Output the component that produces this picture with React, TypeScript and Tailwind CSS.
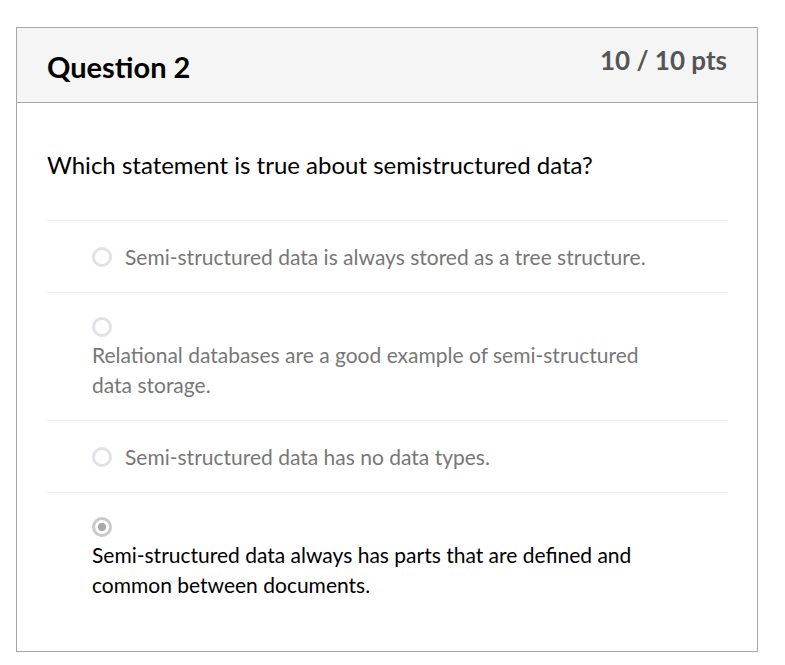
const answers = [
  { text: 'Semi-structured data is always stored as a tree structure.', wrap: false, picked: false },
  { text: 'Relational databases are a good example of semi-structured data storage.', wrap: true, picked: false },
  { text: 'Semi-structured data has no data types.', wrap: false, picked: false },
  { text: 'Semi-structured data always has parts that are defined and common between documents.', wrap: true, picked: true },
];

function Radio({ checked }: { checked: boolean }) {
  return (
    <span
      className={`inline-flex h-[20px] w-[20px] shrink-0 items-center justify-center rounded-full border-[3px] bg-white ${
        checked ? 'border-[#c9c9ce]' : 'border-[#e2e2e6]'
      }`}
    >
      {checked && <span className="h-[8px] w-[8px] rounded-full bg-[#a7a7ae]" />}
    </span>
  );
}

export default function App() {
  return (
    <div className="min-h-[665px] bg-white pt-[27px] pl-[16px] font-['Lato','Noto_Sans',sans-serif]">
      <div className="flex h-[625px] w-[742px] flex-col border border-[#a8a8a8]">
        <div className="flex h-[75px] items-start justify-between border-b border-[#a8a8a8] bg-[#f5f5f5] px-[30px]">
          <h2 className="mt-[21px] text-[29px] font-bold leading-[36px] text-black">Question 2</h2>
          <div className="mt-[16px] text-[26px] font-bold leading-[32px] text-[#555]">10 / 10 pts</div>
        </div>
        <div className="px-[30px]">
          <p className="mt-[45px] text-[24px] leading-[34px] text-black">
            Which statement is true about semistructured data?
          </p>
          <div className="mt-[38px]">
            {answers.map((a, i) => (
              <div key={i} className="border-t border-[#ececec] py-[20px] pl-[45px]">
                {a.wrap ? (
                  <div className="w-[570px]">
                    <div className="flex h-[27px] items-center">
                      <Radio checked={a.picked} />
                    </div>
                    <div
                      className={`text-[21px] leading-[30px] ${a.picked ? 'text-black' : 'text-[#777]'}`}
                    >
                      {a.text}
                    </div>
                  </div>
                ) : (
                  <div className="flex h-[31px] items-center gap-[13px]">
                    <Radio checked={a.picked} />
                    <span className="text-[21px] leading-[31px] text-[#777]">{a.text}</span>
                  </div>
                )}
              </div>
            ))}
          </div>
        </div>
      </div>
    </div>
  );
}
